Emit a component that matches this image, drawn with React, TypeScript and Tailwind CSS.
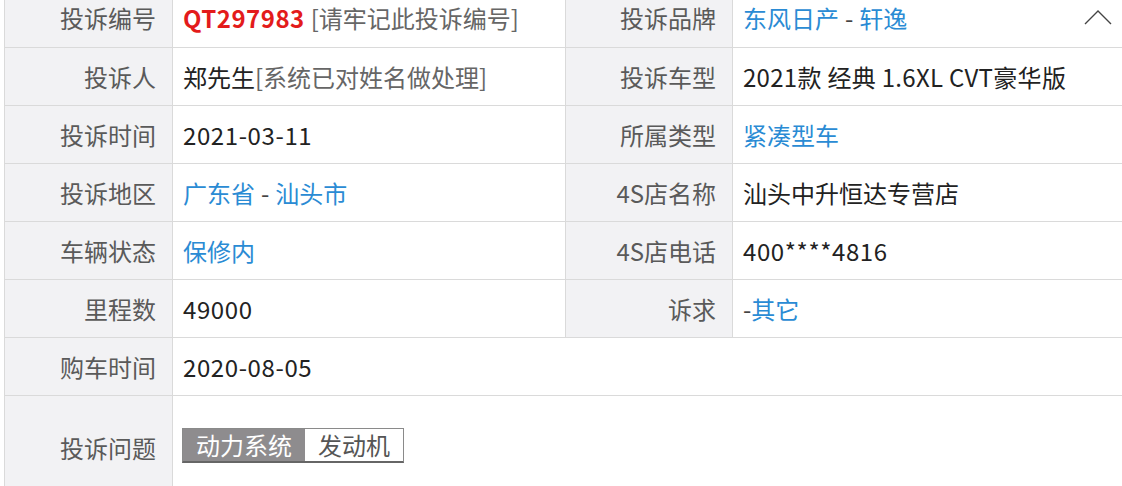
import React from "react";

const font = { fontFamily: '"Noto Sans CJK SC", "Noto Sans", sans-serif' };

function Label({ children, w }: { children: React.ReactNode; w: string }) {
  return (
    <div
      className={`${w} shrink-0 bg-[#f2f2f4] border-r border-[#dadada] flex items-center justify-end pr-[16px] text-[#5a5a5a]`}
    >
      {children}
    </div>
  );
}

function Row({
  h = "h-[58px]",
  children,
}: {
  h?: string;
  children: React.ReactNode;
}) {
  return <div className={`flex ${h} border-b border-[#dadada]`}>{children}</div>;
}

const Blue = ({ children }: { children: React.ReactNode }) => (
  <span className="text-[#2a8bd4]">{children}</span>
);

export default function App() {
  return (
    <div
      className="w-[1122px] h-[486px] overflow-hidden bg-white pl-[4px] text-[24px] leading-none"
      style={font}
    >
      <div className="-mt-[11px] border-l border-[#dadada]">
        <Row h="h-[59px]">
          <Label w="w-[168px]">投诉编号</Label>
          <div className="w-[393px] shrink-0 border-r border-[#dadada] flex items-center pl-[10px]">
            <span className="text-[#e31b1b] font-bold tracking-[0.5px]">QT297983</span>
            <span className="text-[#666] ml-[6px]">[请牢记此投诉编号]</span>
          </div>
          <Label w="w-[167px]">投诉品牌</Label>
          <div className="flex-1 flex items-center pl-[10px] relative">
            <Blue>东风日产</Blue>
            <span className="text-[#444] mx-[6px]">-</span>
            <Blue>轩逸</Blue>
            <svg
              className="absolute right-[10px] top-[20px]"
              width="28"
              height="16"
              viewBox="0 0 28 16"
              fill="none"
            >
              <path d="M1 15 L14 2 L27 15" stroke="#444" strokeWidth="1.4" />
            </svg>
          </div>
        </Row>
        <Row>
          <Label w="w-[168px]">投诉人</Label>
          <div className="w-[393px] shrink-0 border-r border-[#dadada] flex items-center pl-[10px]">
            <span className="text-[#222]">郑先生</span>
            <span className="text-[#666]">[系统已对姓名做处理]</span>
          </div>
          <Label w="w-[167px]">投诉车型</Label>
          <div className="flex-1 flex items-center pl-[10px] text-[#222] tracking-[0.3px]">
            2021款 经典 1.6XL CVT豪华版
          </div>
        </Row>
        <Row>
          <Label w="w-[168px]">投诉时间</Label>
          <div className="w-[393px] shrink-0 border-r border-[#dadada] flex items-center pl-[10px] text-[#222] tracking-[0.6px]">
            2021-03-11
          </div>
          <Label w="w-[167px]">所属类型</Label>
          <div className="flex-1 flex items-center pl-[10px]">
            <Blue>紧凑型车</Blue>
          </div>
        </Row>
        <Row>
          <Label w="w-[168px]">投诉地区</Label>
          <div className="w-[393px] shrink-0 border-r border-[#dadada] flex items-center pl-[10px]">
            <Blue>广东省</Blue>
            <span className="text-[#444] mx-[6px]">-</span>
            <Blue>汕头市</Blue>
          </div>
          <Label w="w-[167px]">4S店名称</Label>
          <div className="flex-1 flex items-center pl-[10px] text-[#222]">
            汕头中升恒达专营店
          </div>
        </Row>
        <Row>
          <Label w="w-[168px]">车辆状态</Label>
          <div className="w-[393px] shrink-0 border-r border-[#dadada] flex items-center pl-[10px]">
            <Blue>保修内</Blue>
          </div>
          <Label w="w-[167px]">4S店电话</Label>
          <div className="flex-1 flex items-center pl-[10px] text-[#222] tracking-[0.6px]">
            400****4816
          </div>
        </Row>
        <Row>
          <Label w="w-[168px]">里程数</Label>
          <div className="w-[393px] shrink-0 border-r border-[#dadada] flex items-center pl-[10px] text-[#222] tracking-[0.6px]">
            49000
          </div>
          <Label w="w-[167px]">诉求</Label>
          <div className="flex-1 flex items-center pl-[10px]">
            <span className="text-[#444]">-</span>
            <Blue>其它</Blue>
          </div>
        </Row>
        <Row>
          <Label w="w-[168px]">购车时间</Label>
          <div className="flex-1 flex items-center pl-[10px] text-[#222] tracking-[0.6px]">
            2020-08-05
          </div>
        </Row>
        <div className="flex h-[98px]">
          <div className="w-[168px] shrink-0 bg-[#f2f2f4] border-r border-[#dadada] flex items-center justify-end pr-[16px] pt-[6px] text-[#5a5a5a]">
            投诉问题
          </div>
          <div className="flex-1 flex items-center pl-[9px]">
            <div className="flex h-[35px] border border-[#8a8a8a] border-b-2 border-b-[#666]">
              <span className="bg-[#8e8c8e] text-white px-[13px] flex items-center">
                动力系统
              </span>
              <span className="bg-white text-[#555] px-[13px] flex items-center">
                发动机
              </span>
            </div>
          </div>
        </div>
      </div>
    </div>
  );
}
